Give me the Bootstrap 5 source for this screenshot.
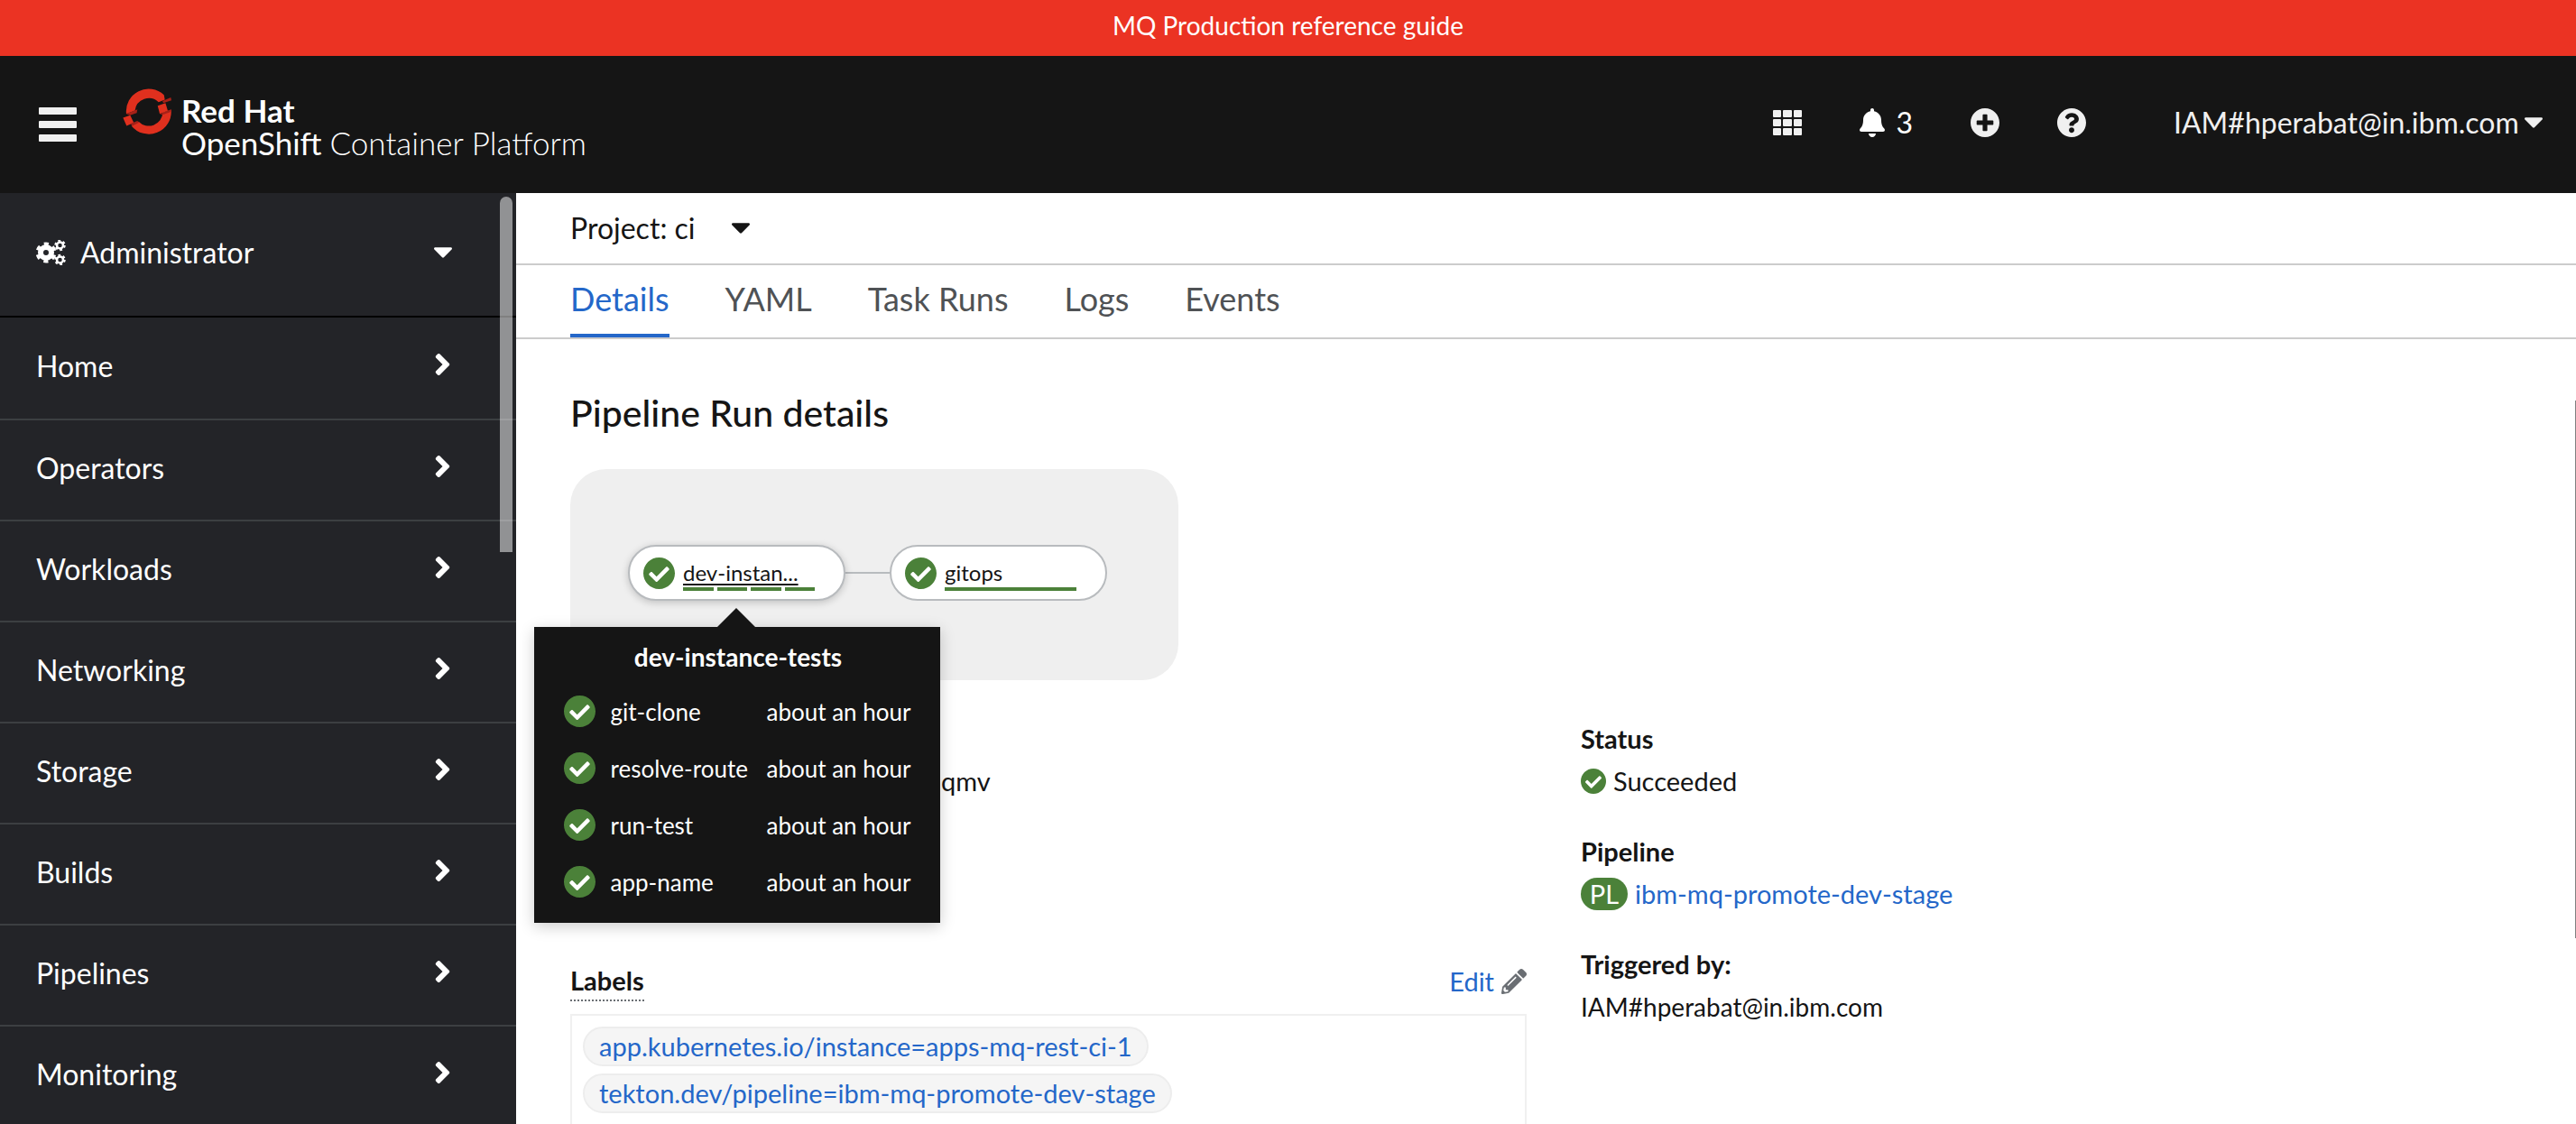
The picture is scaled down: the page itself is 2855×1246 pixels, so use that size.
<!DOCTYPE html>
<html lang="en">
<head>
<meta charset="utf-8">
<meta name="viewport" content="width=device-width, initial-scale=1">
<title>Pipeline Run details</title>
<link rel="stylesheet" href="https://cdn.jsdelivr.net/npm/bootstrap@5.3.0/dist/css/bootstrap.min.css">
<style>
  body { font-family: Lato, "Open Sans", sans-serif; font-size: 29px; line-height: 42px; color: #151515; background: #fff; }
  a { color: #2467c9; text-decoration: none; }
  svg { fill: currentColor; display: block; flex: none; }
  .plain { background: none; border: 0; padding: 0; color: inherit; font: inherit; text-align: left; }
  .banner { background: #eb3323; height: 62px; line-height: 56px; font-size: 28px; }
  .masthead { background: #151515; height: 152px; padding: 0 37px 0 43px; color: #f0f0f0; font-size: 32px; }
  .burger { display: grid; gap: 7px; width: 42px; margin-right: 51px; }
  .burger i { height: 8px; border-radius: 1px; background: #f0f0f0; }
  .brand { color: #fff; font-size: 35px; line-height: 36px; padding-bottom: 2px; }
  .brand svg { margin-right: 10px; }
  .brand-light { font-weight: 300; }
  .brand-name { padding-top: 6px; }
  .tools { gap: 64px; padding-bottom: 4px; }
  .bell { gap: 12px; }
  .user { width: 409px; margin-left: 33px; }
  .side { width: 572px; background: #232428; color: #fff; font-size: 32px; flex: none; }
  .side-scroll { position: absolute; right: 4px; top: 4px; width: 14px; height: 394px; border-radius: 7px 7px 0 0; background: #ffffff80; }
  .persona { height: 138px; border-bottom: 2px solid #000; padding: 0 71px 4px 40px; }
  .side-link { height: 112px; border-bottom: 2px solid #3c3f42; padding: 0 73px 4px 40px; color: #fff; }
  .side-link:first-child { height: 114px; }
  .side-link svg { margin-bottom: 4px; }
  .project { height: 80px; border-bottom: 2px solid #ccc; padding: 0 60px; font-size: 32px; }
  .project button { gap: 40px; }
  .tabs { height: 82px; border-bottom: 2px solid #ccc; padding: 0 60px; gap: 62px; font-size: 36px; }
  .tabs a { color: #4f5255; line-height: 74px; border-bottom: 4px solid transparent; }
  .tabs a.active { color: #2467c9; border-color: #2467c9; }
  .pane { padding: 56px 43px 0 60px; }
  h1 { font-size: 41px; line-height: 52px; font-weight: 500; margin-bottom: 36px; }
  .graph { width: 674px; height: 234px; border-radius: 40px; background: #efefef; padding: 0 78px 4px 64px; margin-bottom: 44px; }
  .node { width: 241px; height: 62px; border: 2px solid #b8bbbe; border-radius: 31px; background: #fff; padding: 0 32px 0 15px; gap: 9px; font-size: 24px; line-height: 32px; }
  .node-hover { box-shadow: 0 2px 8px #0003; }
  .node-hover .node-name { text-decoration: underline; text-underline-offset: 3px; text-decoration-thickness: 2px; }
  .node-body { width: 147px; padding-top: 4px; }
  .steps { gap: 4px; }
  .steps i { height: 4px; flex: 1; background: #4b8139; }
  .wire { width: 49px; height: 2px; background: #b8bbbe; }
  .ok { color: #4b8139; }
  .pop { position: absolute; top: calc(100% + 31px); left: 50%; transform: translateX(-50%); width: 450px; height: 328px; background: #151515; color: #fff; font-size: 26px; padding: 10px 30px 0 33px; box-shadow: 0 4px 16px #0003; z-index: 2; }
  .pop::before { content: ""; position: absolute; top: -21px; left: 203px; border: 21px solid transparent; border-top: 0; border-bottom-color: #151515; }
  .pop-title { font-size: 28px; font-weight: 700; text-align: center; line-height: 46px; margin-bottom: 6px; }
  .step-row { display: grid; grid-template-columns: 34px 155px auto; column-gap: 18px; height: 63px; align-items: center; }
  .columns { gap: 60px; }
  .columns > dl { flex: 1 1 0; min-width: 0; margin: 0; }
  dt { margin-bottom: 5px; }
  dd { margin-bottom: 36px; }
  .run-name { padding-left: 411px; }
  .user-id { font-size: 28px; }
  .labels-head { padding-top: 18px; margin-bottom: 14px; }
  .labels-head dt { margin: 0; border-bottom: 2px dotted #6a6e73; }
  .pencil { fill: #6a6e73; }
  .labels-box { border: 2px solid #f0f0f0; padding: 12px; min-height: 240px; }
  .chip { display: table; height: 44px; line-height: 40px; border: 2px solid #ededed; border-radius: 22px; background: #f5f5f5; padding: 0 16px; margin-bottom: 8px; }
  .kind { background: #4b8139; color: #fff; border-radius: 18px; line-height: 36px; width: 52px; text-align: center; }
  .main-scroll { position: absolute; right: 0; top: 230px; width: 1px; height: 596px; background: #7f7f7f; }
</style>
<script src="https://cdn.jsdelivr.net/npm/bootstrap@5.3.0/dist/js/bootstrap.bundle.min.js"></script>
</head>
<body class="d-flex flex-column vh-100 overflow-hidden">
<svg width="0" height="0" class="position-absolute" aria-hidden="true">
  <symbol id="check" viewBox="8 8 496 496"><circle cx="256" cy="256" r="230" fill="#fff"/><path d="M504 256c0 136.967-111.033 248-248 248S8 392.967 8 256 119.033 8 256 8s248 111.033 248 248zM227.314 387.314l184-184c6.248-6.248 6.248-16.379 0-22.627l-22.627-22.627c-6.248-6.248-16.379-6.249-22.628 0L216 308.118l-70.059-70.059c-6.248-6.248-16.379-6.248-22.628 0l-22.627 22.627c-6.248 6.248-6.248 16.379 0 22.627l104 104c6.249 6.249 16.379 6.249 22.628.001z"/></symbol>
  <symbol id="caret" viewBox="11 192 298 169"><path d="M31.3 192h257.3c17.8 0 26.7 21.5 14.1 34.1L174.1 354.8c-7.8 7.8-20.5 7.8-28.3 0L17.2 226.1C4.6 213.5 13.5 192 31.3 192z"/></symbol>
  <symbol id="angle" viewBox="24 96 208 320"><path d="M224.3 273l-136 136c-9.4 9.4-24.6 9.4-33.9 0l-22.6-22.6c-9.4-9.4-9.4-24.6 0-33.9l96.4-96.4-96.4-96.4c-9.4-9.4-9.4-24.6 0-33.9L54.3 103c9.4-9.4 24.6-9.4 33.9 0l136 136c9.5 9.4 9.5 24.6.1 34z"/></symbol>
</svg>

<div class="banner text-center text-white flex-shrink-0">MQ Production reference guide</div>

<header class="masthead d-flex align-items-center justify-content-between flex-shrink-0">
  <div class="d-flex align-items-center">
    <button class="plain burger" aria-label="Global navigation"><i></i><i></i><i></i></button>
    <a class="brand d-flex align-items-start" href="#">
      <svg width="55" height="51" viewBox="36 28 164 154">
        <g fill="#e0301e">
          <path d="M47 113A75 75 0 0 1 173 50L176 66L155 74A47 47 0 0 0 76 102Z"/>
          <path d="M152 86L178 77L186 103L159 113Z"/>
          <path d="M197 99A75 75 0 0 1 64 153L88 139A47 47 0 0 0 169 109Z"/>
          <path d="M36 126L60 118L72 143L48 153Z"/>
        </g>
        <g fill="#a62118">
          <path d="M168 70L196 58L198 68L171 77Z"/><path d="M160 113L197 98L194 107L168 116Z"/>
          <path d="M47 113L84 98L82 110L60 118Z"/><path d="M62 146L84 137L90 142L66 154Z"/>
        </g>
      </svg>
      <span class="brand-name"><b>Red Hat</b><br>OpenShift <span class="brand-light">Container Platform</span></span>
    </a>
  </div>
  <div class="tools d-flex align-items-center">
    <button class="plain" aria-label="Applications">
      <svg width="32" height="28" viewBox="0 0 32 28"><g id="r"><rect width="9" height="8" rx="1"/><rect x="11" width="10" height="8" rx="1"/><rect x="23" width="9" height="8" rx="1"/></g><use href="#r" y="10"/><use href="#r" y="20"/></svg>
    </button>
    <button class="plain bell d-flex align-items-center text-white" aria-label="Notifications">
      <svg width="28" height="32" viewBox="0 0 448 512"><path d="M224 512c35.320 0 63.970-28.650 63.970-64H160.030c0 35.350 28.650 64 63.970 64zm215.390-149.710c-19.320-20.760-55.470-51.990-55.470-154.290 0-77.700-54.480-139.900-127.940-155.160V32c0-17.670-14.320-32-31.980-32s-31.980 14.330-31.980 32v20.840C118.560 68.100 64.080 130.300 64.080 208c0 102.300-36.150 133.530-55.470 154.290-6 6.450-8.660 14.160-8.610 21.710.11 16.400 12.980 32 32.100 32h383.800c19.120 0 32-15.600 32.100-32 .05-7.550-2.610-15.270-8.610-21.710z"/></svg>
      <span>3</span>
    </button>
    <button class="plain" aria-label="Import YAML">
      <svg width="32" height="32" viewBox="8 8 496 496"><path d="M256 8C119 8 8 119 8 256s111 248 248 248 248-111 248-248S393 8 256 8zm144 276c0 6.600-5.400 12-12 12h-92v92c0 6.600-5.400 12-12 12h-56c-6.600 0-12-5.400-12-12v-92h-92c-6.600 0-12-5.400-12-12v-56c0-6.600 5.400-12 12-12h92v-92c0-6.600 5.400-12 12-12h56c6.600 0 12 5.400 12 12v92h92c6.600 0 12 5.400 12 12v56z"/></svg>
    </button>
    <button class="plain" aria-label="Help">
      <svg width="32" height="32" viewBox="8 8 496 496"><path d="M504 256c0 136.997-111.043 248-248 248S8 392.997 8 256C8 119.083 119.043 8 256 8s248 111.083 248 248zM262.655 90c-54.497 0-89.255 22.957-116.549 63.758-3.536 5.286-2.353 12.415 2.715 16.258l34.699 26.310c5.205 3.947 12.621 3.008 16.665-2.122 17.864-22.658 30.113-35.797 57.303-35.797 20.429 0 45.698 13.148 45.698 32.958 0 14.976-12.363 22.667-32.534 33.976C247.128 238.528 216 254.941 216 296v4c0 6.627 5.373 12 12 12h56c6.627 0 12-5.373 12-12v-1.333c0-28.462 83.186-29.647 83.186-106.667 0-58.002-60.165-102-116.531-102zM256 338c-25.365 0-46 20.635-46 46 0 25.364 20.635 46 46 46s46-20.636 46-46c0-25.364-20.635-46-46-46z"/></svg>
    </button>
    <button class="plain user d-flex align-items-center justify-content-between">
      <span>IAM#hperabat@in.ibm.com</span><svg width="20" height="12"><use href="#caret"/></svg>
    </button>
  </div>
</header>

<div class="d-flex flex-grow-1 overflow-hidden">
  <nav class="side position-relative overflow-hidden" aria-label="Main">
    <button class="plain persona w-100 d-flex align-items-center">
      <svg width="33" height="28" viewBox="0 0 33 28">
        <g fill="none" stroke="#fff">
          <circle cx="11" cy="14" r="6" stroke-width="6"/>
          <circle cx="11" cy="14" r="9" stroke-width="5" stroke-dasharray="4.700 4.720" stroke-dashoffset="-2.400"/>
          <circle cx="26.500" cy="6" r="3.500" stroke-width="2.500"/><circle cx="26.500" cy="6" r="5" stroke-width="2.500" stroke-dasharray="2.600 2.636"/>
          <circle cx="26.500" cy="22" r="3.500" stroke-width="2.500"/><circle cx="26.500" cy="22" r="5" stroke-width="2.500" stroke-dasharray="2.600 2.636"/>
        </g>
      </svg>
      <span class="flex-grow-1 ps-3">Administrator</span>
      <svg width="20" height="12"><use href="#caret"/></svg>
    </button>
    <div>
      <a class="side-link d-flex align-items-center justify-content-between" href="#">Home<svg width="17" height="24"><use href="#angle"/></svg></a>
      <a class="side-link d-flex align-items-center justify-content-between" href="#">Operators<svg width="17" height="24"><use href="#angle"/></svg></a>
      <a class="side-link d-flex align-items-center justify-content-between" href="#">Workloads<svg width="17" height="24"><use href="#angle"/></svg></a>
      <a class="side-link d-flex align-items-center justify-content-between" href="#">Networking<svg width="17" height="24"><use href="#angle"/></svg></a>
      <a class="side-link d-flex align-items-center justify-content-between" href="#">Storage<svg width="17" height="24"><use href="#angle"/></svg></a>
      <a class="side-link d-flex align-items-center justify-content-between" href="#">Builds<svg width="17" height="24"><use href="#angle"/></svg></a>
      <a class="side-link d-flex align-items-center justify-content-between" href="#">Pipelines<svg width="17" height="24"><use href="#angle"/></svg></a>
      <a class="side-link d-flex align-items-center justify-content-between" href="#">Monitoring<svg width="17" height="24"><use href="#angle"/></svg></a>
    </div>
    <div class="side-scroll"></div>
  </nav>

  <main class="flex-grow-1 position-relative overflow-hidden">
    <div class="project d-flex align-items-center">
      <button class="plain d-flex align-items-center">Project: ci<svg width="20" height="12"><use href="#caret"/></svg></button>
    </div>
    <nav class="tabs d-flex" aria-label="Pipeline run">
      <a class="active" href="#">Details</a><a href="#">YAML</a><a href="#">Task Runs</a><a href="#">Logs</a><a href="#">Events</a>
    </nav>
    <section class="pane">
      <h1>Pipeline Run details</h1>
      <div class="graph d-flex align-items-center">
        <div class="node node-hover d-flex align-items-center position-relative">
          <svg class="ok" width="35" height="35"><use href="#check"/></svg>
          <div class="node-body"><div class="node-name">dev-instan...</div><div class="steps d-flex"><i></i><i></i><i></i><i></i></div></div>
          <div class="pop" role="tooltip">
            <div class="pop-title">dev-instance-tests</div>
            <div class="step-row"><svg class="ok" width="35" height="35"><use href="#check"/></svg><span>git-clone</span><span>about an hour</span></div>
            <div class="step-row"><svg class="ok" width="35" height="35"><use href="#check"/></svg><span>resolve-route</span><span>about an hour</span></div>
            <div class="step-row"><svg class="ok" width="35" height="35"><use href="#check"/></svg><span>run-test</span><span>about an hour</span></div>
            <div class="step-row"><svg class="ok" width="35" height="35"><use href="#check"/></svg><span>app-name</span><span>about an hour</span></div>
          </div>
        </div>
        <div class="wire"></div>
        <div class="node d-flex align-items-center">
          <svg class="ok" width="35" height="35"><use href="#check"/></svg>
          <div class="node-body"><div class="node-name">gitops</div><div class="steps d-flex"><i></i></div></div>
        </div>
      </div>

      <div class="columns d-flex">
        <dl>
          <dt>Name</dt>
          <dd class="run-name">qmv</dd>
          <dt>Namespace</dt>
          <dd>ci</dd>
          <div class="labels-head d-flex justify-content-between">
            <dt>Labels</dt>
            <a class="d-flex align-items-center gap-2" href="#">Edit
              <svg class="pencil" width="28" height="28" viewBox="0 0 512 512"><path d="M497.900 142.100l-46.100 46.100c-4.700 4.700-12.300 4.700-17 0l-111-111c-4.700-4.700-4.700-12.300 0-17l46.100-46.100c18.700-18.700 49.100-18.700 67.900 0l60.100 60.100c18.800 18.700 18.800 49.100 0 67.900zM284.200 99.800L21.600 362.400.4 483.900c-2.900 16.400 11.400 30.600 27.800 27.800l121.500-21.300 262.600-262.600c4.700-4.700 4.700-12.300 0-17l-111-111c-4.800-4.700-12.400-4.700-17.100 0zM124.100 339.900c-5.500-5.500-5.500-14.300 0-19.800l154-154c5.500-5.500 14.300-5.500 19.800 0s5.500 14.300 0 19.800l-154 154c-5.500 5.500-14.300 5.500-19.800 0zM88 424h48v36.300l-64.500 11.300-31.100-31.100L51.700 376H88v48z"/></svg></a>
          </div>
          <dd class="labels-box">
            <a class="chip" href="#">app.kubernetes.io/instance=apps-mq-rest-ci-1</a>
            <a class="chip" href="#">tekton.dev/pipeline=ibm-mq-promote-dev-stage</a>
          </dd>
        </dl>
        <dl>
          <dt>Status</dt>
          <dd class="d-flex align-items-center"><svg class="ok me-2" width="28" height="28"><use href="#check"/></svg>Succeeded</dd>
          <dt>Pipeline</dt>
          <dd class="d-flex align-items-center gap-2"><span class="kind">PL</span><a href="#">ibm-mq-promote-dev-stage</a></dd>
          <dt>Triggered by:</dt>
          <dd class="user-id">IAM#hperabat@in.ibm.com</dd>
        </dl>
      </div>
    </section>
    <div class="main-scroll"></div>
  </main>
</div>
</body>
</html>
